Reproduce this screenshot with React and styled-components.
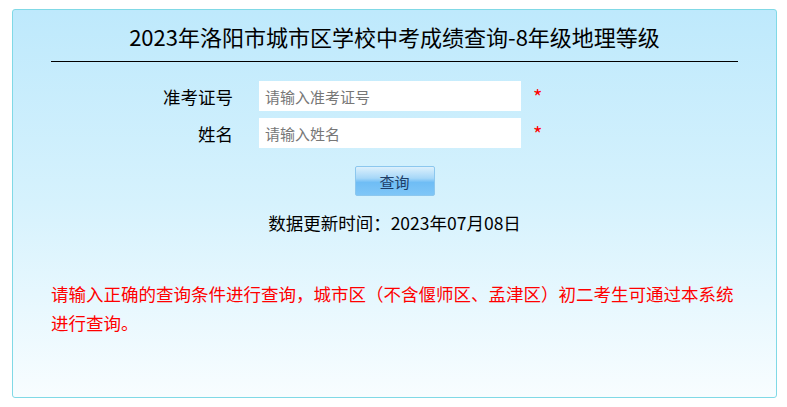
import React from 'react'
import styled, { createGlobalStyle } from 'styled-components'

const GlobalStyle = createGlobalStyle`
  body {
    margin: 0;
    background: #ffffff;
    font-family: "Noto Sans CJK SC", "Noto Sans", sans-serif;
  }
`

const Panel = styled.div`
  box-sizing: border-box;
  width: 765px;
  height: 389px;
  margin: 9px 0 0 12px;
  padding: 10px 38px 0;
  border: 1px solid #80d9e6;
  border-radius: 3px;
  background: linear-gradient(to bottom, #bee9fc 0%, #d6f2fd 50%, #f8fdff 100%);
`

const Title = styled.h1`
  margin: 0;
  padding-bottom: 9px;
  border-bottom: 1px solid #000;
  font-size: 22px;
  font-weight: normal;
  line-height: 32px;
  text-align: center;
  color: #000;
`

const Form = styled.div`
  display: flex;
  flex-direction: column;
  gap: 7px;
  margin-top: 19px;
  padding-left: 82px;
`

const Row = styled.div`
  display: flex;
  align-items: center;
  height: 30px;
`

const Label = styled.label`
  width: 100px;
  margin-right: 26px;
  text-align: right;
  font-size: 17.5px;
  color: #000;
`

const Input = styled.input`
  box-sizing: border-box;
  width: 262px;
  height: 30px;
  padding: 0 6px;
  border: none;
  outline: none;
  background: #fff;
  font-family: inherit;
  font-size: 15px;
  color: #333;

  &::placeholder {
    color: #777;
  }
`

const Required = styled.span`
  margin-left: 12px;
  margin-top: 2px;
  font-size: 20px;
  line-height: 1;
  color: #ff0000;
`

const ButtonRow = styled.div`
  display: flex;
  justify-content: center;
  margin-top: 18px;
`

const QueryButton = styled.button`
  box-sizing: border-box;
  width: 80px;
  height: 30px;
  padding: 0;
  border: 1px solid #8cc7ee;
  border-radius: 2px;
  background: linear-gradient(
    to bottom,
    #dcf0fc 0%,
    #a6d7f8 40%,
    #6fbdf5 55%,
    #7fc6f7 100%
  );
  font-family: inherit;
  font-size: 15px;
  color: #1e3d66;
  cursor: pointer;
`

const UpdateTime = styled.div`
  margin-top: 15px;
  font-size: 17.5px;
  line-height: 24px;
  text-align: center;
  color: #000;
`

const Notice = styled.p`
  margin: 44px 0 0;
  font-size: 17.5px;
  line-height: 29px;
  color: #ff0000;
`

const fields = [
  { label: '准考证号', placeholder: '请输入准考证号' },
  { label: '姓名', placeholder: '请输入姓名' },
]

export default function App() {
  return (
    <>
      <GlobalStyle />
      <Panel>
        <Title>2023年洛阳市城市区学校中考成绩查询-8年级地理等级</Title>
        <Form>
          {fields.map(({ label, placeholder }) => (
            <Row key={label}>
              <Label>{label}</Label>
              <Input placeholder={placeholder} />
              <Required>*</Required>
            </Row>
          ))}
        </Form>
        <ButtonRow>
          <QueryButton>查询</QueryButton>
        </ButtonRow>
        <UpdateTime>数据更新时间：2023年07月08日</UpdateTime>
        <Notice>
          请输入正确的查询条件进行查询，城市区（不含偃师区、孟津区）初二考生可通过本系统进行查询。
        </Notice>
      </Panel>
    </>
  )
}
